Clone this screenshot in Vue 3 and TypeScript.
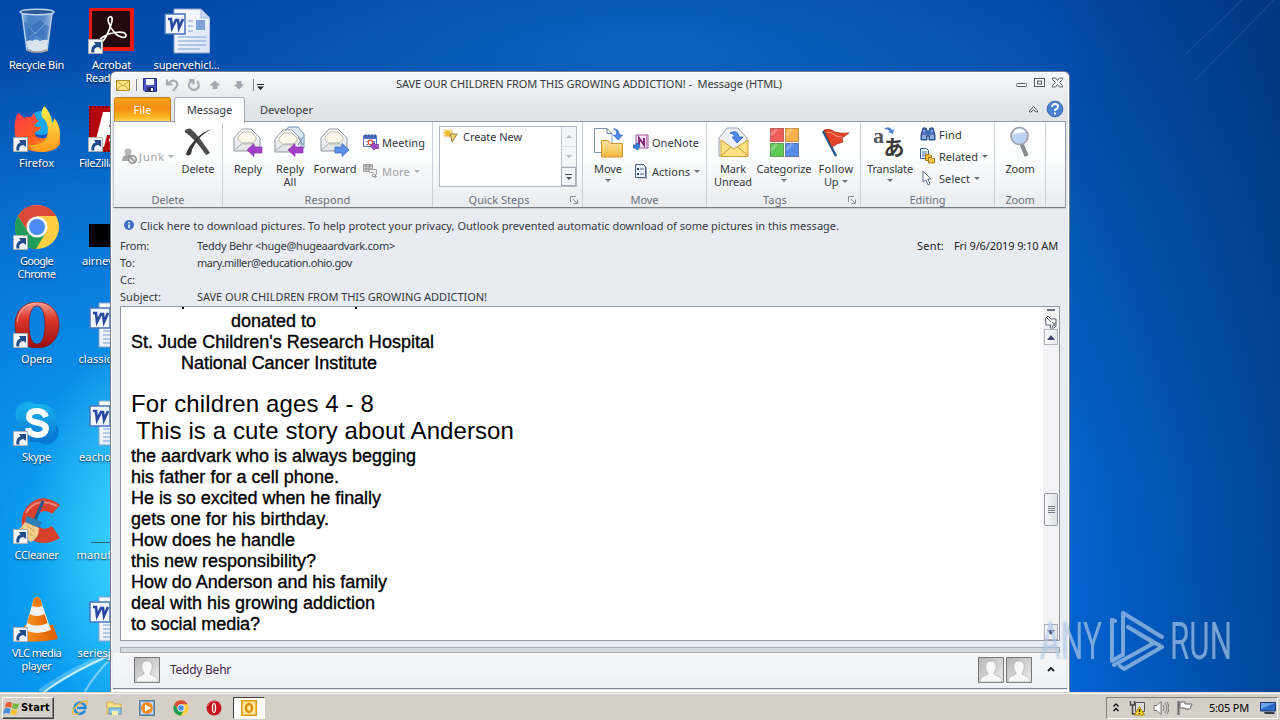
<script setup lang="ts">
import type { Directive } from 'vue'

const vFit: Directive<HTMLElement, number> = {
  mounted(el, binding) {
    const n = (el.textContent ?? '').length
    if (!n || !binding.value) return
    const natural = el.getBoundingClientRect().width
    el.style.letterSpacing = `${((binding.value - natural) / n).toFixed(3)}px`
  },
}

interface Shortcut { icon: string; lines: [string, number][]; link: boolean }
const col1: Shortcut[] = [
  { icon: 'bin', lines: [['Recycle Bin', 55]], link: false },
  { icon: 'firefox', lines: [['Firefox', 35]], link: true },
  { icon: 'chrome', lines: [['Google', 33], ['Chrome', 38]], link: true },
  { icon: 'opera', lines: [['Opera', 31]], link: true },
  { icon: 'skype', lines: [['Skype', 29]], link: true },
  { icon: 'ccleaner', lines: [['CCleaner', 44]], link: true },
  { icon: 'vlc', lines: [['VLC media', 49], ['player', 30]], link: true },
]
const col2: Shortcut[] = [
  { icon: 'acrobat', lines: [['Acrobat', 39], ['Reader DC', 52]], link: true },
  { icon: 'filezilla', lines: [['FileZilla Client', 65]], link: true },
  { icon: 'black', lines: [['airnevada...', 59]], link: false },
  { icon: 'word', lines: [['classicthea...', 66]], link: false },
  { icon: 'word', lines: [['eachopera...', 65]], link: false },
  { icon: 'dash', lines: [['manufactur...', 70]], link: false },
  { icon: 'word', lines: [['seriesjuices...', 68]], link: false },
]
const col3: Shortcut[] = [{ icon: 'word', lines: [['supervehicl...', 66]], link: false }]
const columns = [col1, col2, col3]

interface Big { icon: string; lines: [string, number][]; w: number; arrow?: 'below' | 'inline' }
interface Small { icon: string; text: string; tw: number; arrow?: boolean; off?: boolean }
interface Group { label: string; lw: number; w: number; pad: number; big: Big[]; small: Small[]; smallFirst?: boolean; gallery?: boolean; launcher?: boolean; gap?: number }
const groups: Group[] = [
  { label: 'Delete', lw: 33, w: 109, pad: 7, smallFirst: true, small: [{ icon: 'junk', text: 'Junk', tw: 26, arrow: true, off: true }], big: [{ icon: 'delete', lines: [['Delete', 33]], w: 42 }] },
  { label: 'Respond', lw: 46, w: 210, pad: 4, gap: 4, big: [
    { icon: 'reply', lines: [['Reply', 28]], w: 42 },
    { icon: 'replyall', lines: [['Reply', 28], ['All', 13]], w: 42 },
    { icon: 'forward', lines: [['Forward', 43]], w: 48 }],
    small: [{ icon: 'meeting', text: 'Meeting', tw: 43 }, { icon: 'more', text: 'More', tw: 28, arrow: true, off: true }] },
  { label: 'Quick Steps', lw: 61, w: 150, pad: 6, gallery: true, launcher: true, big: [], small: [] },
  { label: 'Move', lw: 28, w: 124, pad: 4, gap: 4, big: [{ icon: 'move', lines: [['Move', 28]], w: 42, arrow: 'below' }],
    small: [{ icon: 'onenote', text: 'OneNote', tw: 47 }, { icon: 'actions', text: 'Actions', tw: 38, arrow: true }] },
  { label: 'Tags', lw: 24, w: 154, pad: 4, launcher: true, small: [], big: [
    { icon: 'unread', lines: [['Mark', 26], ['Unread', 38]], w: 44 },
    { icon: 'categorize', lines: [['Categorize', 55]], w: 58, arrow: 'below' },
    { icon: 'flag', lines: [['Follow', 35], ['Up', 14]], w: 46, arrow: 'inline' }] },
  { label: 'Editing', lw: 36, w: 134, pad: 3, gap: 4, big: [{ icon: 'translate', lines: [['Translate', 46]], w: 52, arrow: 'below' }],
    small: [{ icon: 'find', text: 'Find', tw: 23 }, { icon: 'related', text: 'Related', tw: 39, arrow: true }, { icon: 'select', text: 'Select', tw: 31, arrow: true }] },
  { label: 'Zoom', lw: 29, w: 51, pad: 0, small: [], big: [{ icon: 'zoom', lines: [['Zoom', 29]], w: 50 }] },
]

const fields: [string, number, string, number][] = [
  ['From:', 29, 'Teddy Behr <huge@hugeaardvark.com>', 198],
  ['To:', 15, 'mary.miller@education.ohio.gov', 155],
  ['Cc:', 15, '', 0],
  ['Subject:', 41, 'SAVE OUR CHILDREN FROM THIS GROWING ADDICTION!', 290],
]

const intro: [string, number, string][] = [
  ['donated to', 85, 'in100'],
  ["St. Jude Children's Research Hospital", 303, ''],
  ['National Cancer Institute', 196, 'in50'],
]
const heads: [string, number, string][] = [
  ['For children ages 4 - 8', 243, ''],
  ['This is a cute story about Anderson', 378, 'in5'],
]
const story: [string, number][] = [
  ['the aardvark who is always begging', 285],
  ['his father for a cell phone.', 208],
  ['He is so excited when he finally', 250],
  ['gets one for his birthday.', 198],
  ['How does he handle', 164],
  ['this new responsibility?', 185],
  ['How do Anderson and his family', 256],
  ['deal with his growing addiction', 244],
  ['to social media?', 129],
]
const launch = ['ie', 'explorer', 'wmp', 'chrome', 'operatb']
</script>

<template>
  <div class="screen">
    <svg class="sprite" width="0" height="0">
      <defs>
        <linearGradient id="gGlass" x1="0" x2="1"><stop offset="0" stop-color="#b8d4ee" stop-opacity=".85" /><stop offset=".25" stop-color="#5d95d2" stop-opacity=".75" /><stop offset=".7" stop-color="#6d9ad0" stop-opacity=".8" /><stop offset="1" stop-color="#c5d9ec" stop-opacity=".8" /></linearGradient>
        <linearGradient id="gFox" x1="0" y1="0" x2="1" y2="1"><stop offset="0" stop-color="#ff3b4e" /><stop offset=".5" stop-color="#ff5a1f" /><stop offset="1" stop-color="#ffb02a" /></linearGradient>
        <linearGradient id="gFox2" x1="0" y1="0" x2="0" y2="1"><stop offset="0" stop-color="#fff14d" /><stop offset="1" stop-color="#ff9a1c" /></linearGradient>
        <linearGradient id="gOpera" x1="0" y1="0" x2="0" y2="1"><stop offset="0" stop-color="#f2a096" /><stop offset=".35" stop-color="#dd3a2c" /><stop offset="1" stop-color="#9c0f0f" /></linearGradient>
        <linearGradient id="gSkype" x1="0" y1="0" x2="0" y2="1"><stop offset="0" stop-color="#14b4ee" /><stop offset="1" stop-color="#0a74cf" /></linearGradient>
        <linearGradient id="gCone" x1="0" x2="1"><stop offset="0" stop-color="#ff9a20" /><stop offset="1" stop-color="#df5c00" /></linearGradient>
        <linearGradient id="gEnv" x1="0" y1="0" x2="0" y2="1"><stop offset="0" stop-color="#ffffff" /><stop offset="1" stop-color="#dfe2e8" /></linearGradient>
        <linearGradient id="gFold" x1="0" y1="0" x2="0" y2="1"><stop offset="0" stop-color="#ffe6a2" /><stop offset="1" stop-color="#f3b63c" /></linearGradient>
        <linearGradient id="gHead" x1="0" y1="0" x2="1" y2="1"><stop offset="0" stop-color="#b6b6b6" /><stop offset="1" stop-color="#ececec" /></linearGradient>
        <linearGradient id="gPage" x1="0" y1="0" x2="1" y2="1"><stop offset="0" stop-color="#ffffff" /><stop offset="1" stop-color="#d5e2f6" /></linearGradient>
      </defs>

      <symbol id="bin" viewBox="-2 0 46 46">
        <path d="M5 4 37 4 32 43Q21 48 10 43Z" transform="translate(0 -1)" fill="url(#gGlass)" />
        <path d="m7 13 9 5 8-6 9 7-3 15-10-7-9 7z" fill="#2e66b3" opacity=".5" /><path d="m12 17 7 9 11-11M13 30l7-6" stroke="#a5c9ec" fill="none" opacity=".5" />
        <path d="M10 34q3-3 6-1 4-3 8 0 5-2 8-1l-1 9q-10 5-19 0z" fill="#e9edf1" opacity=".9" /><path d="m10 41q11 5 22 0l0 2q-11 4-21 0z" fill="#b1a394" />
        <ellipse cx="21" cy="4" rx="17" ry="2.8" fill="#2a5592" stroke="#bdd3ea" stroke-width="1.4" /><path d="m6 5 5 37M36 5l-5 37" stroke="#c9dcee" stroke-width=".9" fill="none" />
      </symbol>
      <symbol id="firefox" viewBox="0 0 46 46">
        <circle cx="24" cy="22" r="17" fill="#1456c0" /><circle cx="27" cy="17" r="12" fill="#18a8f0" />
        <path d="M4 7q4 2 6 5 3-2 7-1 2-2 3-4 1 5 5 8-4 2-5 5 3 1 7 1-1 4-6 5-1 5 5 6 5 1 8-1-3 6-9 6 8 5 15-1 4-5 4-10l4 8q-4 12-20 12Q5 46 1 29-1 16 4 7z" fill="url(#gFox)" />
        <path d="M30 0q-4 7-2 11 6 5 6 13 0 11-10 14-6 2-10 0 4 8 15 8 15-2 17-18 0-10-6-16 0 4-2 5-1-11-8-17z" fill="url(#gFox2)" />
      </symbol>
      <symbol id="chrome" viewBox="0 0 46 46">
        <circle cx="23" cy="23" r="22" fill="#ffce43" /><path d="M23 12h19.1A22 22 0 0 0 3.9 12L14 28z" fill="#dc4a3c" />
        <path d="M3.9 12A22 22 0 0 0 22 45l10-17-9 4-9-4z" fill="#1f9d58" /><circle cx="23" cy="23" r="10.5" fill="#f5f7fa" /><circle cx="23" cy="23" r="8" fill="#4c8bf5" />
      </symbol>
      <symbol id="opera" viewBox="0 0 46 46"><path fill-rule="evenodd" d="M23 0C9 0 1 10 1 23s8 23 22 23 22-10 22-23S37 0 23 0m0 4c5 0 8 7 8 19s-3 19-8 19-8-7-8-19 3-19 8-19" fill="url(#gOpera)" stroke="#8f1010" stroke-width=".7" /><path d="M3 20Q5 3 21 1" stroke="#ffb9af" fill="none" opacity=".8" /></symbol>
      <symbol id="skype" viewBox="0 0 46 46"><circle cx="14" cy="14" r="12.5" fill="#16a8e9" /><circle cx="32" cy="32" r="12.5" fill="#0878d6" /><rect x="4" y="4" width="38" height="38" rx="15" fill="url(#gSkype)" /><path d="M32 17q-2-6-9-6-8 0-8 6 0 4 8 5.500Q32 24 32 29q-1 6-9 6-8-1-9-7" fill="none" stroke="#fff" stroke-width="6" /></symbol>
      <symbol id="ccleaner" viewBox="0 0 46 46"><path d="M46 7Q26-8 12 10 2 27 15 40q14 10 31 0l-8-12q-9 6-14-1-5-11 6-14 5 0 8 3z" fill="#d9402e" /><path d="M12 15Q22-2 43 8" fill="none" stroke="#f0887a" stroke-width="2" /><path d="m29 3-8 19" stroke="#20588f" stroke-width="3" /><path d="m13 18 15 6-3 6-14-6z" fill="#2d80b7" /><path d="m11 24 14 6q0 10-8 14L0 34q7-3 11-10z" fill="#f2cd8f" /><path d="m7 30 12 8m-7-11 8 6M4 34l11 7" stroke="#d39b52" stroke-width="1" /></symbol>
      <symbol id="vlc" viewBox="0 0 46 46"><path d="m11 29-9 15q20 4 42-1l-5-14z" fill="url(#gCone)" /><path d="M23 1q-3 0-4 4l-8 29q12 7 26 0L27 5q-1-4-4-4z" fill="#f1f1f1" /><path d="M19 5q1-4 4-4t4 4l1 5q-4 2-10 0zM15.500 18q7 4 15 0l3 9q-10 5-20.500 0zM11 34q12 6 26 0l1 2q-13 7-28 0z" fill="url(#gCone)" /></symbol>
      <symbol id="acrobat" viewBox="0 0 46 46"><rect width="45" height="43" fill="#e7190b" /><rect x="3" y="3" width="38" height="36" fill="#23080e" /><path d="M21 9c-4 0-1 10 4 15 5 6 13 7 12 3S23 23 14 29c-6 4-4 9 0 4 5-6 10-20 9-23q-1-2-2-1z" fill="none" stroke="#fff" stroke-width="1.700" /></symbol>
      <symbol id="filezilla" viewBox="0 0 46 46"><rect width="46" height="46" fill="#b4080c" /><path d="M1 1h44v44H1z" fill="none" stroke="#7a0507" stroke-dasharray="2 2" stroke-width="2" /><path d="M14 6h28l-2 9H22l-2 6h15l-2 8H18l-3 12H5z" fill="#fff" /><path d="m20 34 8 0-5 8h8" stroke="#fff" stroke-width="3" fill="none" /></symbol>
      <symbol id="black" viewBox="0 0 46 46"><path d="M-1 20h47v23H-1z" fill="#000" /></symbol>
      <symbol id="dash" viewBox="0 0 46 46"><path d="M2 44h44v1H2z" fill="#26515c" opacity=".8" /></symbol>
      <symbol id="word" viewBox="0 0 46 46">
        <path d="M10 1h27l9 9v35H10z" fill="url(#gPage)" stroke="#8ba2c9" /><path d="M37 1v9h9z" fill="#c8d8f2" stroke="#8ba2c9" stroke-width=".6" /><path d="M14 29h28M14 33h28M14 37h28M14 41h22M24 13h5M24 18h5M24 23h5" stroke="#7f9fd6" stroke-width="1.200" /><rect x="32" y="12" width="9" height="10" fill="#7da3d8" />
        <rect x="1" y="6" width="20" height="20" fill="#f1f5fd" stroke="#4773bd" stroke-width="1.500" /><path d="M4 11h3l1 9 4-8h2l1 8 4-9" fill="none" stroke="#26479f" stroke-width="2.600" />
      </symbol>
      <symbol id="link" viewBox="0 0 15 15"><path d="M.5.5h14v14H.5z" fill="#f3f5f8" stroke="#a9b0ba" /><path d="M3.500 13.500Q2.500 7 7.500 5.500L6 3h7v7l-2.500-2Q5 8.500 6.500 13.500z" fill="#204d8a" /></symbol>

      <symbol id="mail" viewBox="0 0 14 11"><path d="M.5.5h13v10H.5z" fill="#ffe68a" stroke="#b58a24" /><path d="m1 1 6 5 6-5M1 10l4.500-5M13 10 8.500 5" fill="none" stroke="#c99c33" /></symbol>
      <symbol id="save" viewBox="0 0 14 14"><path d="M.5.5h13v13H2l-1.500-1.500z" fill="#4a54c4" stroke="#25337f" /><path d="M3 1h8v6H3z" fill="#f2f6ff" /><path d="M4 9h7v5H4z" fill="#252f66" /><path d="M8 10h2v3H8z" fill="#fff" /></symbol>
      <symbol id="undo" viewBox="0 0 14 14"><path d="M2 1.500v5h5.500M3 6q4-5 8-2.500 3 3-1 7l-2 2.500" fill="none" stroke="#aaadb3" stroke-width="2.200" /></symbol>
      <symbol id="redo" viewBox="0 0 14 14"><path d="M5 3Q0 6 3 10q4 4 8 0 2-4-1-7M2 2h4.500v4.500" fill="none" stroke="#aaadb3" stroke-width="2.200" /></symbol>
      <symbol id="up" viewBox="0 0 12 12"><path d="m6 1.500 5.500 5h-3V10h-5V6.500h-3z" fill="#a4a8ae" /></symbol>
      <symbol id="down" viewBox="0 0 12 12"><path d="m6 10.500 5.500-5h-3V2h-5v3.500h-3z" fill="#a4a8ae" /></symbol>

      <symbol id="env" viewBox="0 0 32 32"><path d="M2 12 10 3h9l9 9v13H2z" fill="url(#gEnv)" stroke="#9397a0" /><path d="m6 14 0-3 5-5h8l5 5v3l-5 4h-8z" fill="#fbf7ea" stroke="#b5ae9a" stroke-width=".8" /><path d="m2.500 24 8-7M27.500 24l-8-7M11 17h9" stroke="#a4a8b0" fill="none" /></symbol>
      <symbol id="reply" viewBox="0 0 32 32"><use href="#env" width="32" height="32" /><path d="m15 24 7-6.500V21h8v6h-8v3.500z" fill="#a63fc8" stroke="#7a2b9c" stroke-width=".6" /></symbol>
      <symbol id="replyall" viewBox="0 0 32 32"><path d="m10 5 5-4h9l6 7v14H12z" fill="#dbe9f7" stroke="#6e8fb3" /><use href="#env" width="32" height="32" x="-1" y="1" /><path d="m24 11 5 8m0-8-5 8" stroke="#7590ad" /><path d="m14 24 7-6.500V21h8v6h-8v3.500z" fill="#a63fc8" stroke="#7a2b9c" stroke-width=".6" /></symbol>
      <symbol id="forward" viewBox="0 0 32 32"><use href="#env" width="32" height="32" x="0" /><path d="M30 24l-7-6.500V21h-7v6h7v3.500z" fill="#5c92ea" stroke="#2e60b8" stroke-width=".7" /></symbol>
      <symbol id="delete" viewBox="0 0 32 32"><path d="M3 4q5-3 7 0 6 5 18 23l-4 2Q14 14 3 6z" fill="#4d4d4d" /><path d="M30 3Q18 9 13 18q-3 4-4 10-4 3-5 0 2-7 10-15Q20 6 30 3z" fill="#383838" /></symbol>
      <symbol id="junk" viewBox="0 0 16 16"><circle cx="7" cy="4" r="3.500" fill="#b7b7b7" /><path d="M1 13q0-6 5-6h4l2 6z" fill="#a5a5a5" /><circle cx="11.500" cy="11.500" r="3.800" fill="#e5e5e5" stroke="#929292" stroke-width="1.500" /><path d="m9 9 5 5" stroke="#929292" stroke-width="1.500" /></symbol>
      <symbol id="meeting" viewBox="0 0 16 16"><path d="M.5 1.500h13v11H.5z" fill="#fff" stroke="#5475c4" /><path d="M1 2h12v3H1z" fill="#4d6ec2" /><path d="M3 0v3M6 0v3M9 0v3M12 0v3" stroke="#294b9c" /><path d="M3 7h2v1H3zm0 3h2v1H3zm7-3h2v1h-2z" fill="#6d8bd0" /><circle cx="7.500" cy="8.500" r="2.300" fill="none" stroke="#e04a3c" stroke-width="1.200" /><path d="m7.500 12 4-4v2.500h4v4h-4v2z" fill="#a24fcb" stroke="#732b94" stroke-width=".7" /></symbol>
      <symbol id="more" viewBox="0 0 16 16"><path d="M.5 1.500h9v7h-9z" fill="#d5d5d5" stroke="#a3a3a3" /><path d="M1 3h8M1 6h8M3 1v7M6 1v7" stroke="#969696" /><path d="M6.500 6.500h7v5H11l-1-2H6.500z" fill="#f1f1f1" stroke="#aaa" /><path d="M9.500 11.500v2h4m-2-2 2 2-2 1.500" fill="none" stroke="#999" /></symbol>
      <symbol id="create" viewBox="0 0 16 16"><path d="M1 2h8v6H1z" fill="#fbe49a" stroke="#dcb443" stroke-width=".7" stroke-dasharray="2 1" /><path d="m4 1 1 3 3-2-1 3 3 1-3 1 0 3-2-2-3 1 1-3-3-2 3 0z" fill="#f1ba35" /><path d="M7 6h7l-5 8-1-5z" fill="#f5d573" stroke="#98793c" /></symbol>
      <symbol id="move" viewBox="0 0 32 32"><path d="M2.500 2.500H15l5 5v19H2.500z" fill="#fff" stroke="#8195b5" /><path d="M15 2.500v5h5" fill="none" stroke="#677997" /><path d="M9.500 14.500h7l2 3h12v13.500h-21z" fill="url(#gFold)" stroke="#d1953a" /><path d="M23 3q4 1 3 6h-3l4.500 5L32 9h-3q-1-7-6-6z" transform="translate(-1.500 0)" fill="#4c8af0" stroke="#2b5fc0" stroke-width=".7" /></symbol>
      <symbol id="onenote" viewBox="0 0 16 16"><path d="M3 1h12v13H3z" fill="#f6eaf5" stroke="#a04a9c" /><path d="M6 11V4l5 7V4" fill="none" stroke="#81297d" stroke-width="2" /><path d="M13.500 2v11" stroke="#ca8ac6" /><path d="M0 11h3l1-2.500 3 3-2 4H3V14H0z" fill="#3d82df" stroke="#1e56a7" stroke-width=".6" /></symbol>
      <symbol id="actions" viewBox="0 0 16 16"><path d="M2.500 1.500h8l2 2v11h-10z" fill="#e9f1fb" stroke="#4c6084" /><path d="M4 5h2v2H4zm0 5h2v2H4z" fill="#2d4265" /><path d="M7 6h4M7 11h4" stroke="#4e688f" /><path d="M13.500 4v12H5" fill="none" stroke="#9aa7bb" /></symbol>
      <symbol id="unread" viewBox="0 0 32 32"><path d="M2 12 10 2h11l9 10v18H2z" fill="#eceff3" stroke="#9da1a9" /><path d="M4 30.500h27V14L17 23 4 14z" fill="#ffe184" stroke="#d1a034" /><path d="m4 30 10-9M31 30l-10-9" stroke="#c9972a" /><path d="M13 7q8-4 9 4h4l-6 6-5-6h3q-1-4-5-4z" fill="#4f89ee" stroke="#275abc" stroke-width=".8" /></symbol>
      <symbol id="categorize" viewBox="0 0 32 32"><path d="M2 2h14v14H2z" fill="#f05e5b" /><path d="M17 2h14v14H17z" fill="#f8b149" /><path d="M2 17h14v14H2z" fill="#5fc955" /><path d="M17 17h14v14H17z" fill="#598ae7" /><path d="M2.500 2.500h13v13h-13zm15 0h13v13h-13zm-15 15h13v13h-13zm15 0h13v13h-13z" fill="none" stroke="#725a5a" stroke-opacity=".4" /><path d="m3 9 6-6M3 24l6-6M18 9l6-6M18 24l6-6" stroke="#fff" stroke-opacity=".25" stroke-width="3" /></symbol>
      <symbol id="flag" viewBox="0 0 32 32"><path d="m3 5 13 25" stroke="#23598d" stroke-width="2.500" /><path d="M4 4q6-2 11 2 6 2 14 1-4 3-7 5l1 4q-6 1-11 5z" fill="#e44528" stroke="#a92b18" stroke-width=".8" /><path d="M7 6q6 0 9 4l6 1" fill="none" stroke="#f79b7f" /></symbol>
      <symbol id="find" viewBox="0 0 16 16"><path d="M3 2h3l1 3h2l1-3h3l2 7v5H9v-4H7v4H1V9z" fill="#4b72bd" stroke="#1f427f" /><path d="M3 9v4m2-4v4m6-4v4m2-4v4M4 4v2m8-2v2" stroke="#d6e5fa" /></symbol>
      <symbol id="related" viewBox="0 0 16 16"><path d="M.5.5h6l2 2v8h-8z" fill="#edf4ff" stroke="#3c5e94" /><path d="M2 4h5M2 6h5M2 8h4" stroke="#5379b2" /><path d="M5.500 6.500h4l1 1h1v5h-6z" fill="#f7bd3b" stroke="#a8741a" /><path d="M8.500 9.500h3l1 1h2v4.500h-6z" fill="#f9c853" stroke="#a8741a" /></symbol>
      <symbol id="select" viewBox="0 0 16 16"><path d="m3 1 8 8H8l2 5-2 1-2-5-3 2z" fill="#fff" stroke="#5b7191" /></symbol>
      <symbol id="zoom" viewBox="0 0 32 32"><path d="m19 17 5 12-3 1.500-5-12z" fill="#8b8f94" stroke="#676a6e" stroke-width=".6" /><circle cx="15.500" cy="10" r="8.500" fill="#b9d3f0" stroke="#a0a4aa" stroke-width="1.700" /><path d="M9 9q1-6 7-6.500 5 1 5 4-8 0-12 2.500z" fill="#f5faff" /></symbol>
      <symbol id="head" viewBox="0 0 26 26"><path d="M.5.5h25v25H.5z" fill="url(#gHead)" stroke="#777" /><path d="M13 4c-4 0-6 3-5 8 1 3 2 3 2 5-1 2-8 1-8 8h22c0-7-7-6-8-8 0-2 1-2 2-5 1-5-1-8-5-8z" fill="#f8f8f8" stroke="#aaa" stroke-width=".7" /></symbol>
      <symbol id="ie" viewBox="0 0 16 16"><path d="M13 10.500A5.500 5.500 0 1 1 13.500 8H5" fill="none" stroke="#2489d8" stroke-width="2.600" /><path d="M1 14C-1 10 8 1 14 1q2 1 0 4M1 14q3 1 6-1" stroke="#e9b93d" fill="none" stroke-width="1.300" /></symbol>
      <symbol id="explorer" viewBox="0 0 16 16"><path d="M1 2h6l1 2h7v10H1z" fill="#f6df8a" stroke="#cfa94b" /><path d="M3 8h12v6H3z" fill="#8fcbec" stroke="#5a96bf" /><path d="M6 11h6v4H6z" fill="#fff1b4" /></symbol>
      <symbol id="wmp" viewBox="0 0 16 16"><path d="M.5.5h15v15H.5z" fill="#7aa7d6" stroke="#50799f" /><path d="M2 2h12v12H2z" fill="#c7ddf1" /><circle cx="8" cy="8" r="6" fill="#f28b1d" /><path d="m6 4.500 6 3.500-6 3.500z" fill="#fff" /></symbol>
      <symbol id="operatb" viewBox="0 0 16 16"><circle cx="8" cy="8" r="7.500" fill="#c81420" /><path d="M1.500 6Q4 0 10 1" stroke="#ec7d80" fill="none" /><ellipse cx="8" cy="8" rx="2.200" ry="5" fill="#fff" /><ellipse cx="8" cy="8" rx=".8" ry="4" fill="#ad0e18" /></symbol>
      <symbol id="outlook" viewBox="0 0 16 16"><path d="M.8.8h14.400v14.400H.8z" fill="#fde79a" stroke="#dc9a13" stroke-width="1.500" /><ellipse cx="8" cy="8" rx="3" ry="4" fill="none" stroke="#dd8e09" stroke-width="2.300" /></symbol>
      <symbol id="windows" viewBox="0 0 17 16"><path d="M3 3q3-2 6 0L8 8Q5 6 2 8z" fill="#e95c2d" /><path d="M10 3q3 2 6 0l-1 5q-3 2-6 0z" fill="#75b740" /><path d="M1.500 9q3-2 6 0l-1 5Q4 12 0 14z" fill="#3f8fdd" /><path d="M8.500 9q3 2 6 0l-1 5q-3 2-6 0z" fill="#f6c12f" /></symbol>
      <symbol id="net" viewBox="0 0 16 16"><path d="M1.500 1v4h4V1M3.500 5v9H7" fill="none" stroke="#444" stroke-width="1.400" /><path d="M6.500 2.500h9v9h-9z" fill="#ddd" stroke="#555" /><path d="m10.500 6.500 5 8.500h-10z" fill="#ffd81e" stroke="#a98308" /><path d="M10.500 9v3m0 1v1" stroke="#222" stroke-width="1.300" /></symbol>
      <symbol id="speaker" viewBox="0 0 16 16"><path d="M1 5.500h3l4-4v13l-4-4H1z" fill="#fff" stroke="#777" /><path d="M10 5q2 3 0 6M12 3q4 5 0 10M14 2q4 6 0 12" fill="none" stroke="#777" /></symbol>
      <symbol id="tflag" viewBox="0 0 16 16"><path d="M1.500 1v14" stroke="#666" stroke-width="2" /><path d="M3 2h5v2h7l-2 5H8V8H3z" fill="#fff" stroke="#666" /></symbol>
      <symbol id="monitor" viewBox="0 0 16 14"><path d="M.5 1.500h15v8.500H.5z" fill="#2d69c9" stroke="#1b3a70" /><path d="M1 2h14L1 8z" fill="#6da1ea" /><path d="M4 11h10l1 2H5z" fill="#333c4b" /></symbol>
    </svg>

    <svg class="beams" viewBox="0 0 240 70"><path d="M40 62Q85 30 150 10" fill="none" stroke="#c6f6ff" stroke-width="6" opacity=".3" /><path d="M44 62Q85 32 150 10" fill="none" stroke="#edfdff" stroke-width="2" opacity=".75" /><path d="M84 63Q100 35 130 12" fill="none" stroke="#dffaff" stroke-width="2" opacity=".5" /></svg>
    <svg class="rays" viewBox="0 0 190 140"><path d="M95 55 152 0M105 80 184 0" stroke="#7bb5e4" stroke-width="1.500" opacity=".1" /></svg>

    <div class="desktop">
      <div v-for="(col, c) in columns" :key="c" class="dcol">
        <div v-for="(s, i) in col" :key="i" class="shortcut">
          <div class="dicon">
            <svg width="46" height="46"><use :href="'#' + s.icon" width="46" height="46" /></svg>
            <svg v-if="s.link" class="badge" width="15" height="15"><use href="#link" width="15" height="15" /></svg>
          </div>
          <div v-for="l in s.lines" :key="l[0]" class="dlabel"><span v-fit="l[1]">{{ l[0] }}</span></div>
        </div>
      </div>
    </div>

    <main class="window">
      <header class="titlebar">
        <div class="qat">
          <svg class="q1" width="14" height="11"><use href="#mail" width="14" height="11" /></svg>
          <i class="bar"></i>
          <svg class="q2" width="14" height="14"><use href="#save" width="14" height="14" /></svg>
          <svg class="q3" width="14" height="14"><use href="#undo" width="14" height="14" /></svg>
          <svg class="q3" width="14" height="14"><use href="#redo" width="14" height="14" /></svg>
          <svg class="q3" width="12" height="12"><use href="#up" width="12" height="12" /></svg>
          <svg class="q4" width="12" height="12"><use href="#down" width="12" height="12" /></svg>
          <i class="bar"></i>
          <svg class="q5" width="7" height="6" viewBox="0 0 7 6"><path d="M0 .5h7" stroke="#222" /><path d="M0 2.500h7L3.500 6z" fill="#222" /></svg>
        </div>
        <div class="title"><span v-fit="386">SAVE OUR CHILDREN FROM THIS GROWING ADDICTION! -&nbsp; Message (HTML)</span></div>
        <svg class="winbtns" width="50" height="14" viewBox="0 0 50 14">
          <rect x="2.500" y="6.500" width="10" height="3" rx="1" fill="#fff" stroke="#555a62" />
          <rect x="20.500" y="1.500" width="10" height="8" fill="#fff" stroke="#555a62" /><rect x="23.500" y="4" width="4" height="3" fill="#eee" stroke="#555a62" />
          <path d="M38.500 1h3l2 2.500 2-2.500h3v1.500L45.500 5.500l3 3V10h-3l-2-2.500-2 2.500h-3V8.500l3-3-3-3z" fill="#fff" stroke="#555a62" />
        </svg>
      </header>

      <nav class="tabs">
        <div class="tab file"><span v-fit="18">File</span></div>
        <div class="tab active"><span v-fit="45">Message</span></div>
        <div class="tab plain"><span v-fit="53">Developer</span></div>
        <svg class="help" width="36" height="18" viewBox="0 0 36 18"><path d="m1.500 11 4-4.500 4 4.500v1H8l-2.500-2L3 12H1.500z" fill="#fff" stroke="#4f545c" /><circle cx="27" cy="9" r="7.800" fill="#4b83d3" stroke="#3464a9" /><path d="M24 7q0-3 3-3t3 2.500q0 1.500-3 3.500v1m0 1.500v2" fill="none" stroke="#fff" stroke-width="1.900" /></svg>
      </nav>

      <section class="ribbon">
        <div v-for="g in groups" :key="g.label" class="group" :style="{ width: g.w + 'px' }">
          <div class="gbody" :class="{ rev: g.smallFirst }" :style="{ paddingLeft: g.pad + 'px' }">
            <div v-for="b in g.big" :key="b.icon" class="big" :style="{ width: b.w + 'px' }">
              <svg v-if="b.icon !== 'translate'" width="32" height="32"><use :href="'#' + b.icon" width="32" height="32" /></svg>
              <svg v-else width="32" height="32" viewBox="0 0 32 32"><text x="-1" y="17" class="tra">a</text><text x="9.500" y="29" class="trb">あ</text><path d="M10 3q5-4 8 1l2-1-1 5-5-2 2-1q-2-2-6-2z" fill="#4c7fd5" /></svg>
              <div v-for="(l, i) in b.lines" :key="i" class="blabel"><span v-fit="l[1]">{{ l[0] }}</span><i v-if="b.arrow === 'inline' && i === b.lines.length - 1" class="arr"></i></div>
              <i v-if="b.arrow === 'below'" class="arr below"></i>
            </div>
            <div v-if="g.small.length" class="smalls" :class="'n' + g.small.length" :style="{ marginLeft: (g.gap ?? 0) + 'px' }">
              <div v-for="s in g.small" :key="s.text" class="small" :class="{ off: s.off }">
                <svg width="16" height="16"><use :href="'#' + s.icon" width="16" height="16" /></svg>
                <span v-fit="s.tw">{{ s.text }}</span><i v-if="s.arrow" class="arr"></i>
              </div>
            </div>
            <div v-if="g.gallery" class="gallery">
              <div class="gitem"><svg width="16" height="16"><use href="#create" width="16" height="16" /></svg><span v-fit="59">Create New</span></div>
              <div class="gscroll"><div><i class="arr gup"></i></div><div><i class="arr"></i></div><div class="on"><b></b><i class="arr"></i></div></div>
            </div>
          </div>
          <div class="glabel" :class="{ haslaunch: g.launcher }"><span v-fit="g.lw">{{ g.label }}</span>
            <svg v-if="g.launcher" class="launcher" width="8" height="8" viewBox="0 0 8 8"><path d="M.5 6V.5H6M3 3l4 4M7.500 3.500v4h-4" fill="none" stroke="#8b9098" /></svg>
          </div>
        </div>
      </section>

      <section class="envelope">
        <div class="info"><svg width="10" height="10" viewBox="0 0 10 10"><circle cx="5" cy="5" r="5" fill="#426fc6" /><path d="M5 2v1.500M5 4.500V8" stroke="#fff" stroke-width="1.500" /></svg><span v-fit="699">Click here to download pictures. To help protect your privacy, Outlook prevented automatic download of some pictures in this message.</span></div>
        <div v-for="f in fields" :key="f[0]" class="field">
          <div class="fname"><span v-fit="f[1]">{{ f[0] }}</span></div>
          <div class="fval"><span v-fit="f[3]">{{ f[2] }}</span></div>
          <div v-if="f[0] === 'From:'" class="sent"><span v-fit="27">Sent:</span><span v-fit="104">Fri 9/6/2019 9:10 AM</span></div>
        </div>
      </section>

      <section class="doc">
        <article>
          <div class="tails"><i></i><i></i></div>
          <p v-for="l in intro" :key="l[0]" :class="l[2]"><span v-fit="l[1]">{{ l[0] }}</span></p>
          <h2 v-for="l in heads" :key="l[0]" :class="l[2]"><span v-fit="l[1]">{{ l[0] }}</span></h2>
          <p v-for="l in story" :key="l[0]"><span v-fit="l[1]">{{ l[0] }}</span></p>
        </article>
        <aside class="scroll">
          <div class="split"></div>
          <svg width="14" height="14" viewBox="0 0 14 14"><path d="M1.500 3.500 4 1l3 3h5v7l-2 2H6l1-3H2z" fill="#fff" stroke="#555c68" /><path d="m3 3 4 4M8 7l4 5M8 12l4-5" stroke="#555c68" /></svg>
          <div class="sbtn"><i class="tri"></i></div>
          <div class="track"><div class="thumb"><b></b><b></b><b></b><b></b></div></div>
          <div class="sbtn"><i class="tri dn"></i></div>
        </aside>
      </section>

      <div class="splitter"></div>
      <footer class="people">
        <svg width="26" height="26"><use href="#head" width="26" height="26" /></svg>
        <span v-fit="61" class="pname">Teddy Behr</span>
        <div class="pright">
          <svg width="26" height="26"><use href="#head" width="26" height="26" /></svg>
          <svg width="26" height="26"><use href="#head" width="26" height="26" /></svg>
          <svg class="pchev" width="8" height="5" viewBox="0 0 8 5"><path d="m1 4 3-3 3 3" fill="none" stroke="#222" stroke-width="1.800" /></svg>
        </div>
      </footer>
    </main>

    <footer class="taskbar">
      <div class="start"><svg width="17" height="16"><use href="#windows" width="17" height="16" /></svg><span v-fit="29">Start</span></div>
      <div class="launch"><svg v-for="t in launch" :key="t" width="16" height="16"><use :href="'#' + t" width="16" height="16" /></svg></div>
      <div class="running"><svg width="16" height="16"><use href="#outlook" width="16" height="16" /></svg></div>
      <div class="tray">
        <svg class="tchev" width="6" height="9" viewBox="0 0 6 9"><path d="m.5 3.500 2.500-2.500 2.500 2.500m-5 4.500L3 5.500 5.500 8" fill="none" stroke="#111" stroke-width="1.400" /></svg>
        <svg width="16" height="16"><use href="#net" width="16" height="16" /></svg>
        <svg width="16" height="16"><use href="#speaker" width="16" height="16" /></svg>
        <svg width="16" height="16"><use href="#tflag" width="16" height="16" /></svg>
        <span class="clock"><span v-fit="40">5:05 PM</span></span>
        <svg width="16" height="14"><use href="#monitor" width="16" height="14" /></svg>
      </div>
    </footer>

    <svg class="mark" width="200" height="70" viewBox="0 0 200 70">
      <text x="4" y="54" textLength="62" lengthAdjust="spacingAndGlyphs">ANY</text>
      <g fill="none" stroke-linejoin="round" stroke-linecap="round"><path class="mk" d="M79 16l-3-1v41l10-6M126 32 87 8v42M92 22l26 16-40 22M126 42l-38 22-4-3M126 42 97 25" /></g>
      <text x="134" y="54" textLength="62" lengthAdjust="spacingAndGlyphs">RUN</text>
    </svg>
  </div>
</template>

<style>
body { margin: 0; overflow: hidden; }
</style>
<style scoped>
* { box-sizing: border-box; }
svg { display: block; flex: none; }
.screen {
  position: relative; width: 1280px; height: 720px; overflow: hidden; display: flex; flex-direction: column;
  font: 11px/13px "Noto Sans", "Noto Sans CJK JP", sans-serif; color: #353941;
  background:
    radial-gradient(ellipse 110px 200px at 140px 535px, rgba(90, 230, 255, .75), transparent),
    radial-gradient(ellipse 440px 520px at 140px 570px, rgba(15, 185, 250, .95), rgba(10, 150, 240, .65) 50%, transparent),
    radial-gradient(ellipse 480px 150px at 650px 50px, rgba(18, 112, 205, .6), transparent),
    linear-gradient(90deg, transparent 1030px, rgba(0, 38, 90, .52) 1280px),
    linear-gradient(180deg, #0449a8 0, #0558b8 190px, #0568d6 480px, #026ae0 720px);
}
.sprite { position: absolute; }
span { white-space: pre; }
.beams { position: absolute; left: 0; top: 630px; width: 240px; height: 70px; }
.rays { position: absolute; right: 0; top: 0; width: 190px; height: 140px; }
.desktop { position: absolute; left: -1px; top: 8px; display: flex; }
.dcol { width: 75px; display: flex; flex-direction: column; }
.shortcut { height: 98px; display: flex; flex-direction: column; align-items: center; }
.dicon { position: relative; width: 46px; height: 46px; margin-bottom: 4px; }
.badge { position: absolute; left: -1px; bottom: 0; }
.dlabel { color: #fff; height: 13px; line-height: 13px; text-shadow: 0 1px 2px #001d45; white-space: nowrap; }

.window {
  position: absolute; left: 110px; top: 71px; width: 960px; height: 621px; border-radius: 6px 6px 0 0; overflow: hidden;
  background: linear-gradient(#f7f8fa, #e3e6e9 34px, #e0e4e7 50px, #e9edf3 140px); border: 1px solid #747f91; border-bottom-color: #fff;
  box-shadow: inset 0 0 0 1px #fff; padding: 0 3px; display: flex; flex-direction: column;
}
.titlebar { height: 25px; flex: none; display: grid; grid-template-columns: 282px 1fr 52px; align-items: start; }
.qat { display: flex; align-items: center; height: 26px; padding-left: 2px; }
.bar { width: 1px; height: 12px; background: #7b8089; }
.q1 { margin-right: 6px; } .q2 { margin: 0 8px 0 6px; } .q3 { margin-right: 8px; } .q3:nth-of-type(5) { margin-right: 10px; } .q4 { margin: 0 8px 0 2px; } .q5 { margin-left: 3px; margin-top: 3px; }
.title { padding-top: 5px; }
.winbtns { margin-top: 5px; }
.tabs { height: 24px; flex: none; display: flex; position: relative; z-index: 1; }
.tab { height: 24px; display: flex; align-items: center; justify-content: center; }
.file { width: 57px; color: #fff; background: linear-gradient(#f9aa18, #f58b12 45%, #fbb51d 80%, #ffd351); border: 1px solid #cd7f1d; border-bottom: 0; border-radius: 3px 3px 0 0; }
.active { width: 71px; height: 26px; margin-left: 3px; padding-bottom: 2px; background: linear-gradient(#fafbfc, #fff); border: 1px solid #a7acb4; border-bottom: 0; border-radius: 3px 3px 0 0; }
.plain { margin-left: 15px; }
.help { margin: 3px 2px 0 auto; }
.ribbon { height: 87px; flex: none; display: flex; background: linear-gradient(#fff, #fcfdfd 35px, #e9ecef); border: 1px solid #969ca6; border-left-color: #c1c5cb; border-bottom: 1px solid #777c85; margin-left: -1px; }
.group { display: flex; flex-direction: column; border-right: 1px solid #ccd0d6; flex: none; }
.gbody { height: 69px; display: flex; align-items: flex-start; }
.rev { flex-direction: row-reverse; justify-content: flex-end; }
.rev .smalls { width: 56px; }
.big { display: flex; flex-direction: column; align-items: center; padding-top: 4px; flex: none; }
.big svg { margin-bottom: 4px; }
.blabel { height: 13px; display: flex; align-items: center; }
.blabel .arr { margin-left: 4px; }
.arr { width: 0; height: 0; border: solid transparent; border-width: 3px 3px 0; border-top-color: #6e747d; flex: none; }
.below { margin-top: 4px; }
.smalls { display: flex; flex-direction: column; }
.small { display: flex; align-items: center; height: 22px; gap: 3px; }
.small .arr { margin-left: 1px; }
.n1 { padding-top: 23px; } .n1 .small { gap: 2px; }
.n2 { padding-top: 9px; gap: 7px; }
.n3 { padding-top: 1px; }
.off { color: #a0a2a6; } .off .arr { border-top-color: #b0b2b6; }
.gallery { margin-top: 4px; display: flex; width: 138px; height: 61px; border: 1px solid #b5bac1; background: #fff; }
.gitem { flex: 1; display: flex; gap: 4px; height: 18px; align-items: center; padding-left: 3px; }
.gscroll { width: 15px; border-left: 1px solid #c4c8ce; display: grid; grid-template-rows: 20px 20px 19px; background: #f4f5f7; }
.gscroll div { display: flex; flex-direction: column; align-items: center; justify-content: center; border-bottom: 1px solid #dfe1e4; }
.gscroll .arr { border-top-color: #b5b8be; } .gscroll .gup { transform: rotate(180deg); }
.gscroll .on { border: 1px solid #a9aeb7; margin-left: -1px; } .gscroll .on .arr { border-top-color: #4f545c; } .on b { width: 7px; height: 1px; background: #4f545c; margin-bottom: 2px; }
.glabel { position: relative; height: 16px; display: flex; justify-content: center; align-items: center; color: #6a717d; }
.haslaunch { padding-right: 17px; }
.launcher { position: absolute; right: 4px; top: 5px; }
.tra { font: bold 22px "Liberation Serif", serif; fill: #555; } .trb { font: 21px "Noto Sans CJK JP", sans-serif; font-weight: 700; fill: #3a3a3a; }

.envelope { height: 98px; flex: none; padding: 7px 6px 0; border-top: 1px solid #cfd3da; background: #e8ebf2; }
.info { display: flex; align-items: center; height: 18px; gap: 6px; padding-left: 4px; margin-bottom: 3px; }
.field { display: flex; height: 17px; align-items: center; }
.fname { width: 77px; }
.sent { margin-left: auto; display: flex; gap: 10px; padding-right: 2px; color: #1e2126; }
.doc { height: 335px; flex: none; margin: 0 6px 0 6px; background: #fff; border: 1px solid #9499a5; display: flex; }
article { flex: 1; padding-left: 10px; color: #000; font-family: "Liberation Sans", Arial, sans-serif; overflow: hidden; }
.tails { height: 4px; display: flex; gap: 171px; padding-left: 51px; } .tails i { width: 2px; height: 2px; background: #000; }
p { margin: 0; font-size: 18px; line-height: 21px; height: 21px; -webkit-text-stroke: .35px #000; }
h2 { margin: 0; font-weight: 400; font-size: 24px; line-height: 27px; height: 27px; }
h2:first-of-type { margin-top: 16px; } h2 + p { margin-top: 2px; }
.in100 { padding-left: 100px; } .in50 { padding-left: 50px; } .in5 { padding-left: 5px; }
.scroll { width: 16px; background: #f3f3f5; display: flex; flex-direction: column; align-items: center; }
.split { width: 8px; height: 2px; background: #6a7080; margin: 2px 0 4px; }
.sbtn { width: 14px; height: 16px; flex: none; border: 1px solid #b0b4bc; background: linear-gradient(90deg, #fff, #e6e8ec); display: flex; align-items: center; justify-content: center; }
.tri { width: 0; height: 0; border: solid transparent; border-width: 0 4.500px 5px; border-bottom-color: #3d4569; } .dn { transform: rotate(180deg); }
.track { flex: 1; padding-top: 148px; }
.thumb { width: 14px; height: 33px; border: 1px solid #969ba5; border-radius: 2px; background: linear-gradient(90deg, #fafafa, #dcdfe4); display: flex; flex-direction: column; gap: 1px; align-items: center; justify-content: center; }
.thumb b { width: 7px; height: 1px; background: #737884; }
.splitter { height: 6px; flex: none; margin: 6px 6px 0; border: 1px solid #a5aab5; background: #d5d9e1; }
.people { height: 36px; flex: none; display: flex; align-items: center; padding: 0 10px 2px 21px; background: linear-gradient(#f6f7f9, #edf0f4); border-bottom: 1px solid #7e8592; margin: 0 -1px; }
.pname { margin-left: 10px; color: #3f2748; font-size: 12px; }
.pright { margin-left: auto; display: flex; align-items: center; gap: 2px; padding-right: 2px; } .pchev { margin-left: 13px; }

.taskbar { margin-top: auto; height: 28px; background: #d4d0c8; border-top: 1px solid #d4d0c8; box-shadow: inset 0 1px #fff; display: flex; align-items: center; padding: 3px 2px 1px; color: #000; position: relative; }
.start { width: 52px; height: 22px; display: flex; align-items: center; gap: 1px; font-weight: 700; font-family: "DejaVu Sans Condensed", "DejaVu Sans", sans-serif; border: 1px solid; border-color: #fff #404040 #404040 #fff; box-shadow: inset -1px -1px #808080; }
.launch { display: flex; gap: 17.500px; margin-left: 18px; }
.running { width: 32px; height: 22px; margin-left: 11px; background: #fff; border: 1px solid; border-color: #404040 #fff #fff #404040; display: flex; align-items: center; justify-content: center; }
.tray { margin-left: auto; width: 172px; height: 22px; border: 1px solid; border-color: #808080 #fff #fff #808080; display: flex; align-items: center; gap: 8px; padding-left: 6px; }
.tchev { margin-right: 2px; }
.clock { width: 40px; margin: 0 3px 0 8px; }
.mark { position: absolute; left: 1036px; top: 605px; filter: drop-shadow(0 0 1px rgba(60, 80, 110, .35)); }
.mark text { font: 400 51px Roboto, "Liberation Sans", sans-serif; fill: #bcd6f5; fill-opacity: .62; }
.mk { stroke: #bcd6f5; stroke-opacity: .62; stroke-width: 4px; }
</style>
